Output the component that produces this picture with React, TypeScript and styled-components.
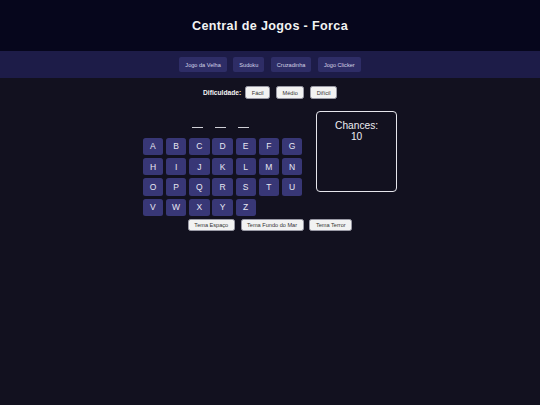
import styled, { createGlobalStyle } from "styled-components";

// Global page reset
const GlobalStyle = createGlobalStyle`
  html, body {
    margin: 0;
    padding: 0;
    background-color: #12111f;
    font-family: "Liberation Sans", Arial, sans-serif;
    color: #fff;
  }
`;

const Page = styled.div`
  min-height: 405px;
  background-color: #12111f;
`;

const Header = styled.header`
  height: 51px;
  background-color: #06061c;
  display: flex;
  align-items: center;
  justify-content: center;
`;

const Title = styled.h1`
  margin: 0;
  font-size: 12.6px;
  font-weight: bold;
  letter-spacing: 0.35px;
  color: #f2f2f2;
`;

const Nav = styled.nav`
  height: 27px;
  background-color: #1d1c48;
  display: flex;
  align-items: center;
  justify-content: center;
  gap: 6.5px;
`;

const NavButton = styled.button`
  height: 14.5px;
  padding: 0 6px;
  border: none;
  border-radius: 2px;
  background-color: #2e2d66;
  color: #d4d4e6;
  font-family: inherit;
  font-size: 5.6px;
  cursor: pointer;
`;

const DifficultyRow = styled.div`
  margin-top: 8.3px;
  display: flex;
  align-items: center;
  justify-content: center;
  gap: 6px;
`;

const DifficultyLabel = styled.span`
  font-size: 6.7px;
  font-weight: bold;
  color: #f4f4f4;
  margin-right: -2px;
`;

const LightButton = styled.button<{ $h?: number }>`
  height: ${(p) => p.$h ?? 13}px;
  padding: 0 5.5px;
  border: 1px solid #9a9aa6;
  border-radius: 2.5px;
  background-color: #f2f2f2;
  color: #333;
  font-family: inherit;
  font-size: 5.6px;
  cursor: pointer;
`;

const GameRow = styled.div`
  margin-top: 11.4px;
  display: flex;
  align-items: flex-start;
  justify-content: center;
  gap: 13.7px;
`;

const LeftColumn = styled.div`
  display: flex;
  flex-direction: column;
`;

const WordRow = styled.div`
  height: 17.6px;
  display: flex;
  align-items: flex-end;
  justify-content: center;
  gap: 11.7px;
  margin-left: -4px;
`;

const Blank = styled.span`
  width: 11px;
  height: 0;
  border-bottom: 1.4px solid #cfcfd6;
`;

const Keyboard = styled.div`
  margin-top: 9.4px;
  display: grid;
  grid-template-columns: repeat(7, 20.4px);
  grid-auto-rows: 17.5px;
  column-gap: 2.8px;
  row-gap: 2.8px;
`;

const LetterButton = styled.button`
  border: none;
  border-radius: 2.5px;
  background-color: #383776;
  color: #e8e8f2;
  font-family: inherit;
  font-size: 8.5px;
  padding: 0;
  cursor: pointer;
`;

const ChancesBox = styled.div`
  width: 81.3px;
  height: 81.6px;
  box-sizing: border-box;
  border: 1.6px solid #e6e6ec;
  border-radius: 4px;
  padding-top: 8.2px;
  text-align: center;
  font-size: 10.2px;
  color: #ececf2;
`;

const ThemeRow = styled.div`
  margin-top: 2.6px;
  display: flex;
  justify-content: center;
  gap: 5.8px;
`;

const navItems = ["Jogo da Velha", "Sudoku", "Cruzadinha", "Jogo Clicker"];
const levels = ["Fácil", "Médio", "Difícil"];
const themes = ["Tema Espaço", "Tema Fundo do Mar", "Tema Terror"];
const letters = "ABCDEFGHIJKLMNOPQRSTUVWXYZ".split("");

const App = () => {
  return (
    <Page>
      <GlobalStyle />
      <Header>
        <Title>Central de Jogos - Forca</Title>
      </Header>
      <Nav>
        {navItems.map((item) => (
          <NavButton key={item}>{item}</NavButton>
        ))}
      </Nav>
      <DifficultyRow>
        <DifficultyLabel>Dificuldade:</DifficultyLabel>
        {levels.map((level) => (
          <LightButton key={level}>{level}</LightButton>
        ))}
      </DifficultyRow>
      <GameRow>
        <LeftColumn>
          <WordRow>
            <Blank />
            <Blank />
            <Blank />
          </WordRow>
          <Keyboard>
            {letters.map((letter) => (
              <LetterButton key={letter}>{letter}</LetterButton>
            ))}
          </Keyboard>
        </LeftColumn>
        <ChancesBox>
          Chances:
          <br />
          10
        </ChancesBox>
      </GameRow>
      <ThemeRow>
        {themes.map((theme) => (
          <LightButton key={theme} $h={12.6}>
            {theme}
          </LightButton>
        ))}
      </ThemeRow>
    </Page>
  );
};

export default App;
